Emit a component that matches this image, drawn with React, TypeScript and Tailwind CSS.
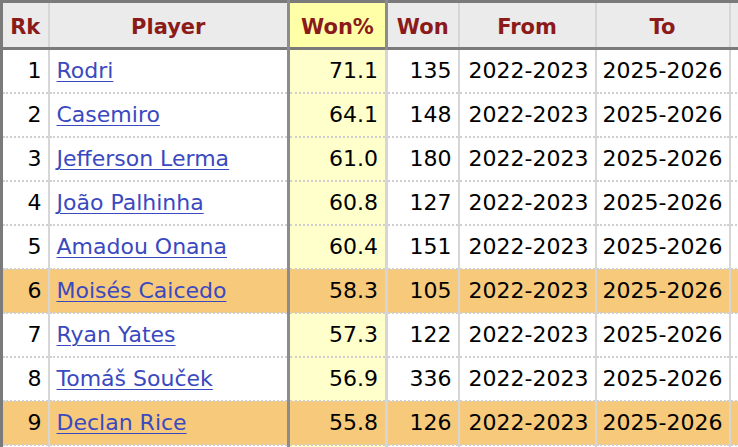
import React from "react";

const rows = [
  { rk: 1, player: "Rodri", pct: "71.1", won: 135, hl: false },
  { rk: 2, player: "Casemiro", pct: "64.1", won: 148, hl: false },
  { rk: 3, player: "Jefferson Lerma", pct: "61.0", won: 180, hl: false },
  { rk: 4, player: "João Palhinha", pct: "60.8", won: 127, hl: false },
  { rk: 5, player: "Amadou Onana", pct: "60.4", won: 151, hl: false },
  { rk: 6, player: "Moisés Caicedo", pct: "58.3", won: 105, hl: true },
  { rk: 7, player: "Ryan Yates", pct: "57.3", won: 122, hl: false },
  { rk: 8, player: "Tomáš Souček", pct: "56.9", won: 336, hl: false },
  { rk: 9, player: "Declan Rice", pct: "55.8", won: 126, hl: true },
];

const th = "h-[47px] p-0 pt-[5px] text-[21px] font-bold text-[#8b1a1a] text-center border-r-2 border-[#d6d6d6]";
const td =
  "h-[44px] p-0 text-[22px] border-solid border-r-2 border-r-[#d6d6d6] border-b-2 border-b-[#cfcfcf] [border-bottom-style:dotted]";

export default function App() {
  return (
    <div className="w-[738px] h-[447px] overflow-hidden bg-white" style={{ fontFamily: '"DejaVu Sans", Verdana, sans-serif' }}>
      <table className="border-collapse table-fixed w-[760px] border-l-[3px] border-l-[#7a7a7a]">
        <colgroup>
          <col className="w-[47px]" />
          <col className="w-[240px]" />
          <col className="w-[98px]" />
          <col className="w-[72px]" />
          <col className="w-[137px]" />
          <col className="w-[134px]" />
          <col className="w-[32px]" />
        </colgroup>
        <thead>
          <tr className="bg-[#ebebeb] border-t-[3px] border-t-[#7a7a7a] border-b-[3px] border-b-[#7a7a7a]">
            <th className={th}>Rk</th>
            <th className={th}>Player</th>
            <th className={`${th} bg-[#ffffa8] border-l-[3px] border-l-[#8c8c8c] border-r-[3px] border-r-[#8c8c8c]`}>Won%</th>
            <th className={th}>Won</th>
            <th className={th}>From</th>
            <th className={th}>To</th>
            <th className={th}></th>
          </tr>
        </thead>
        <tbody>
          {rows.map((r) => (
            <tr key={r.rk} className={r.hl ? "bg-[#f6c97b]" : "bg-white"}>
              <td className={`${td} text-right pr-[6px] text-black`}>{r.rk}</td>
              <td className={`${td} text-left pl-[7px]`}>
                <a href="#" className="text-[#3a49c0] underline underline-offset-[3px] decoration-1">
                  {r.player}
                </a>
              </td>
              <td
                className={`${td} text-right pr-[7px] text-black border-l-[3px] border-l-[#8c8c8c] border-r-[3px] border-r-[#8c8c8c] ${
                  r.hl ? "" : "bg-[#ffffcc]"
                }`}
              >
                {r.pct}
              </td>
              <td className={`${td} text-right pr-[6px] text-black`}>{r.won}</td>
              <td className={`${td} text-right pr-[6px] text-black`}>2022-2023</td>
              <td className={`${td} text-right pr-[6px] text-black`}>2025-2026</td>
              <td className={td}></td>
            </tr>
          ))}
          <tr className="bg-white">
            <td className={td}></td>
            <td className={td}></td>
            <td className={`${td} bg-[#ffffcc] border-l-[3px] border-l-[#8c8c8c] border-r-[3px] border-r-[#8c8c8c]`}></td>
            <td className={td}></td>
            <td className={td}></td>
            <td className={td}></td>
            <td className={td}></td>
          </tr>
        </tbody>
      </table>
    </div>
  );
}
